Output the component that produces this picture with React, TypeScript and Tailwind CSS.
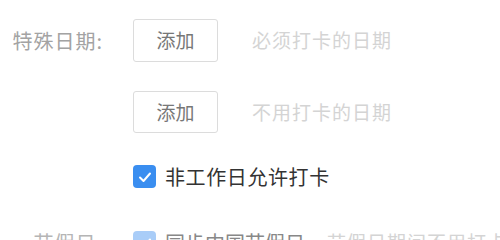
import React from "react";

const font = { fontFamily: '"Noto Sans CJK SC", "Noto Sans", sans-serif' };

function Check({ disabled }: { disabled?: boolean }) {
  return (
    <span
      className={`flex h-[23px] w-[23px] shrink-0 items-center justify-center rounded-[4px] ${
        disabled ? "bg-[#a9cdf8]" : "bg-[#3a8ef0]"
      }`}
    >
      <svg width="16" height="16" viewBox="0 0 16 16" fill="none">
        <path d="M3 8.5 L6.5 12 L13 4.5" stroke="white" strokeWidth="2" strokeLinecap="round" strokeLinejoin="round" />
      </svg>
    </span>
  );
}

export default function App() {
  return (
    <div className="h-[240px] w-[500px] overflow-hidden bg-white" style={font}>
      <div className="flex flex-col pt-[19px]">
        <div className="flex h-[43px] items-center">
          <div className="w-[105px] shrink-0 whitespace-nowrap pr-[2px] text-right text-[20px] tracking-[1px] text-[#a3a3a3]">特殊日期:</div>
          <button className="ml-[28px] flex h-[43px] w-[85px] shrink-0 items-center justify-center rounded-[3px] border border-[#dcdcdc] text-[19px] text-[#777]">
            添加
          </button>
          <div className="ml-[34px] whitespace-nowrap text-[19px] tracking-[1px] text-[#d4d4d4]">必须打卡的日期</div>
        </div>
        <div className="mt-[29px] flex h-[42px] items-center">
          <div className="w-[105px] shrink-0" />
          <button className="ml-[28px] flex h-[42px] w-[85px] shrink-0 items-center justify-center rounded-[3px] border border-[#dcdcdc] text-[19px] text-[#777]">
            添加
          </button>
          <div className="ml-[34px] whitespace-nowrap text-[19px] tracking-[1px] text-[#d4d4d4]">不用打卡的日期</div>
        </div>
        <div className="mt-[32px] flex h-[23px] items-center">
          <div className="w-[105px] shrink-0" />
          <div className="ml-[28px] flex items-center">
            <Check />
            <span className="ml-[9px] whitespace-nowrap text-[20px] tracking-[0.6px] text-[#333]">非工作日允许打卡</span>
          </div>
        </div>
        <div className="mt-[43px] flex h-[23px] items-center">
          <div className="w-[105px] shrink-0 whitespace-nowrap pr-[2px] text-right text-[20px] tracking-[1px] text-[#b5b5b5]">节假日:</div>
          <div className="ml-[28px] flex shrink-0 items-center">
            <Check disabled />
            <span className="ml-[9px] whitespace-nowrap text-[20px] tracking-[0px] text-[#888]">同步中国节假日</span>
            <span className="ml-[22px] whitespace-nowrap text-[19px] tracking-[1px] text-[#d4d4d4]">节假日期间不用打卡</span>
          </div>
        </div>
      </div>
    </div>
  );
}
